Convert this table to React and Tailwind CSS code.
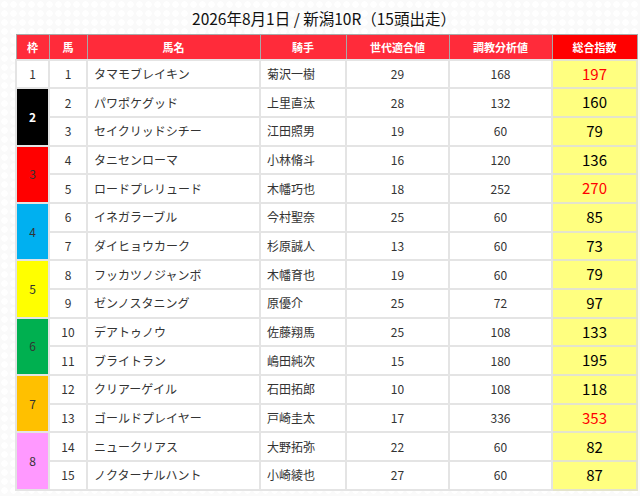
const rows = [
  { waku: 1, no: 1, name: "タマモブレイキン", jockey: "菊沢一樹", gen: 29, train: 168, total: 197, hot: true },
  { waku: 2, no: 2, name: "パワポケグッド", jockey: "上里直汰", gen: 28, train: 132, total: 160 },
  { waku: 2, no: 3, name: "セイクリッドシチー", jockey: "江田照男", gen: 19, train: 60, total: 79 },
  { waku: 3, no: 4, name: "タニセンローマ", jockey: "小林脩斗", gen: 16, train: 120, total: 136 },
  { waku: 3, no: 5, name: "ロードプレリュード", jockey: "木幡巧也", gen: 18, train: 252, total: 270, hot: true },
  { waku: 4, no: 6, name: "イネガラーブル", jockey: "今村聖奈", gen: 25, train: 60, total: 85 },
  { waku: 4, no: 7, name: "ダイヒョウカーク", jockey: "杉原誠人", gen: 13, train: 60, total: 73 },
  { waku: 5, no: 8, name: "フッカツノジャンボ", jockey: "木幡育也", gen: 19, train: 60, total: 79 },
  { waku: 5, no: 9, name: "ゼンノスタニング", jockey: "原優介", gen: 25, train: 72, total: 97 },
  { waku: 6, no: 10, name: "デアトゥノウ", jockey: "佐藤翔馬", gen: 25, train: 108, total: 133 },
  { waku: 6, no: 11, name: "ブライトラン", jockey: "嶋田純次", gen: 15, train: 180, total: 195 },
  { waku: 7, no: 12, name: "クリアーゲイル", jockey: "石田拓郎", gen: 10, train: 108, total: 118 },
  { waku: 7, no: 13, name: "ゴールドプレイヤー", jockey: "戸崎圭太", gen: 17, train: 336, total: 353, hot: true },
  { waku: 8, no: 14, name: "ニュークリアス", jockey: "大野拓弥", gen: 22, train: 60, total: 82 },
  { waku: 8, no: 15, name: "ノクターナルハント", jockey: "小崎綾也", gen: 27, train: 60, total: 87 },
];

const wakuStyle = {
  1: "bg-white text-[#333]",
  2: "bg-black text-white font-bold",
  3: "bg-[#ff0000] text-[#333]",
  4: "bg-[#00b0f0] text-[#333]",
  5: "bg-[#ffff00] text-[#333]",
  6: "bg-[#00b050] text-[#333]",
  7: "bg-[#ffc000] text-[#333]",
  8: "bg-[#ff99ff] text-[#333]",
};

const th = "border border-[#a8a8a8] bg-[#ff2b3a] text-white font-bold text-[11px] h-[25px] text-center";
const td = "border-2 border-[#e4e4e4] h-[28.7px] text-[12px] text-[#333] text-center";

export default function App() {
  return (
    <div
      className="min-h-[496px] w-[640px] bg-[#fafafa] bg-[radial-gradient(circle,#ffffff_3px,transparent_3.5px)] bg-[length:9px_9px] pt-[8px]"
      style={{ fontFamily: '"Noto Sans CJK JP", "Noto Sans", sans-serif' }}
    >
      <h1 className="text-center text-[15.5px] leading-[21px] text-[#111] pl-[8px] mb-[5px]">
        2026年8月1日 / 新潟10R（15頭出走）
      </h1>
      <table className="ml-[15px] w-[621px] border-collapse table-fixed bg-white">
        <colgroup>
          <col className="w-[33px]" />
          <col className="w-[38px]" />
          <col className="w-[173px]" />
          <col className="w-[86px]" />
          <col className="w-[103px]" />
          <col className="w-[103px]" />
          <col className="w-[85px]" />
        </colgroup>
        <thead>
          <tr>
            <th className={th}>枠</th>
            <th className={th}>馬</th>
            <th className={th}>馬名</th>
            <th className={th}>騎手</th>
            <th className={th}>世代適合値</th>
            <th className={th}>調教分析値</th>
            <th className="border border-[#a8a8a8] bg-[#ff0000] text-white font-bold text-[11px] h-[25px] text-center">
              総合指数
            </th>
          </tr>
        </thead>
        <tbody>
          {rows.map((r, i) => {
            const first = i === 0 || rows[i - 1].waku !== r.waku;
            const span = rows.filter((x) => x.waku === r.waku).length;
            return (
              <tr key={r.no}>
                {first && (
                  <td rowSpan={span} className={`${td} ${wakuStyle[r.waku]}`}>
                    {r.waku}
                  </td>
                )}
                <td className={td}>{r.no}</td>
                <td className={`${td} text-left pl-[6px]`}>{r.name}</td>
                <td className={`${td} text-left pl-[6px]`}>{r.jockey}</td>
                <td className={td}>{r.gen}</td>
                <td className={td}>{r.train}</td>
                <td
                  className={`border-2 border-[#e4e4cc] h-[28.7px] bg-[#ffff80] text-center text-[15px] ${
                    r.hot ? "text-[#ff0000]" : "text-black"
                  }`}
                >
                  {r.total}
                </td>
              </tr>
            );
          })}
        </tbody>
      </table>
    </div>
  );
}
